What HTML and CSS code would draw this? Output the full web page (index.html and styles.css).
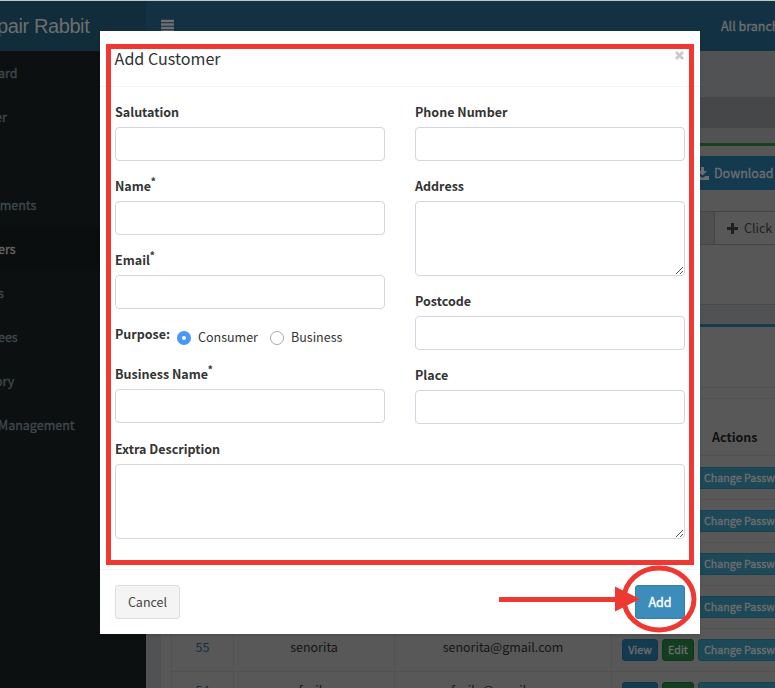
FILE: index.html
```html
<!DOCTYPE html>
<html lang="en">
<head>
<meta charset="utf-8">
<title>Repair Rabbit</title>
<link rel="stylesheet" href="styles.css">
</head>
<body>
<div class="app">
  <header class="topbar">
    <div class="brand">pair Rabbit</div>
    <svg class="bars" width="14" height="14" viewBox="0 0 14 14"><path d="M0 2h13M0 5.500h13M0 9h13M0 12.500h13"/></svg>
    <span class="branch">All branches</span>
  </header>
  <div class="main">
    <nav class="sidebar">
      <a>ard</a><a class="tight">er</a><a></a><a class="tight">tments</a><a class="active">ers</a><a>s</a><a>ees</a><a class="tight">ory</a><a>Management</a>
    </nav>
    <div class="content">
      <div class="crumb"></div>
      <section class="tools">
        <div class="download"><svg width="13" height="13" viewBox="0 0 13 13"><path d="M5 0h3v4h3L6.500 8.500 2 4h3zM0 9h3.500l3 2 3-2H13v4H0z"/></svg>Download</div>
        <div class="filters"><div class="click"><svg width="11" height="11" viewBox="0 0 11 11"><path d="M4 0h3v4h4v3H7v4H4V7H0V4h4z"/></svg>Click</div></div>
      </section>
      <section class="list">
        <div class="band"></div>
        <div class="row head"><span></span><span></span><span></span><span class="actions">Actions</span></div>
        <div class="row"><span></span><span></span><span></span><span class="actions"><b class="view">View</b><b class="edit">Edit</b><b class="pass">Change Password</b></span></div>
        <div class="row"><span></span><span></span><span></span><span class="actions"><b class="view">View</b><b class="edit">Edit</b><b class="pass">Change Password</b></span></div>
        <div class="row"><span></span><span></span><span></span><span class="actions"><b class="view">View</b><b class="edit">Edit</b><b class="pass">Change Password</b></span></div>
        <div class="row"><span></span><span></span><span></span><span class="actions"><b class="view">View</b><b class="edit">Edit</b><b class="pass">Change Password</b></span></div>
        <div class="row"><span class="id">55</span><span>senorita</span><span>senorita@gmail.com</span><span class="actions"><b class="view">View</b><b class="edit">Edit</b><b class="pass">Change Password</b></span></div>
        <div class="row"><span class="id">54</span><span>fazila</span><span>fazila@gmail.com</span><span class="actions"><b class="view">View</b><b class="edit">Edit</b><b class="pass">Change Password</b></span></div>
      </section>
    </div>
  </div>
</div>
<form class="modal">
  <div class="modal-header"><h4>Add Customer</h4><svg width="9" height="9" viewBox="0 0 9 9"><path d="M1 1l7 7M8 1L1 8"/></svg></div>
  <div class="modal-body">
    <div class="columns">
      <div>
        <label>Salutation</label><div class="input"></div>
        <label>Name<sup>*</sup></label><div class="input"></div>
        <label>Email<sup>*</sup></label><div class="input"></div>
        <div class="purpose"><strong>Purpose:</strong><i class="radio on"></i><span class="consumer">Consumer</span><i class="radio"></i><span>Business</span></div>
        <label>Business Name<sup>*</sup></label><div class="input"></div>
      </div>
      <div>
        <label>Phone Number</label><div class="input"></div>
        <label>Address</label><div class="input area"><svg width="9" height="9" viewBox="0 0 9 9"><path d="M1 8l7-7M5 8l3-3"/></svg></div>
        <label>Postcode</label><div class="input"></div>
        <label>Place</label><div class="input"></div>
      </div>
    </div>
    <label>Extra Description</label><div class="input area"><svg width="9" height="9" viewBox="0 0 9 9"><path d="M1 8l7-7M5 8l3-3"/></svg></div>
  </div>
  <div class="modal-footer"><div class="btn">Cancel</div><div class="btn add">Add</div></div>
</form>
<svg class="marks" width="775" height="688" viewBox="0 0 775 688"><rect class="line" x="108.500" y="46.500" width="583" height="516"/><path class="line" d="M499 599.500h118"/><ellipse class="line" cx="659" cy="599" rx="35" ry="31"/><path class="tip" d="M615 586.500l25 12.500-25 12.500z"/></svg>
</body>
</html>
```
FILE: styles.css
```css
* { box-sizing: border-box; }
body { margin: 0; width: 775px; height: 688px; overflow: hidden; position: relative; font: 12.5px/20px "Noto Sans CJK SC", sans-serif; color: #333; white-space: nowrap; }
.app { height: 688px; overflow: hidden; background: #515254; border-top: 1px solid #c3c6c3; }
.topbar { height: 50px; display: flex; background: #123244; color: #6e6e6e; }
.brand { width: 146px; flex: none; background: #112c3b; font: 20px/50px "Liberation Sans", sans-serif; letter-spacing: -.4px; text-indent: -3px; }
.bars { flex: none; margin: 18px 0 0 15px; stroke: #6e6e6e; stroke-width: 2.4; }
.branch { margin-left: 546px; line-height: 50px; }
.branch, .sidebar, .download, .row b { font-weight: 400; -webkit-text-stroke: .35px currentColor; }
.main { display: flex; }
.sidebar { width: 146px; height: 640px; background: #0c1011; color: #40484c; flex: none; text-indent: -2px; }
.sidebar a { display: block; height: 44px; line-height: 44px; }
.sidebar .tight { text-indent: -5px; }
.sidebar .active { color: #666; background: #0b0e0f; }
.content { flex: none; width: 720px; padding: 46px 0 0 15px; }
.crumb { height: 31px; background: #464749; margin-bottom: 15px; }
.tools { height: 162px; background: #575757; border-top: 3px solid #17401f; padding-top: 10px; border-bottom: 1px solid #4b4b4b; }
.download { margin-left: 523px; height: 34px; padding: 0 12px; background: #143a50; color: #6e6e6e; line-height: 34px; display: flex; align-items: center; gap: 5px; }
.download svg { fill: #6e6e6e; }
.filters { margin-top: 21px; height: 34px; padding-left: 552px; background: #505050; border: 1px solid #444; }
.click { background: #585858; border-left: 1px solid #444; line-height: 32px; padding-left: 12px; display: flex; gap: 6px; align-items: center; color: #202020; }
.click svg { fill: #202020; }
.list { margin-top: 19px; border-top: 3px solid #153b53; background: #585858; padding: 60px 0 0 10px; }
.band { height: 12px; margin: 0 0 18px -10px; border-top: 1px solid #525252; border-bottom: 1px solid #525252; }
.row { height: 43px; display: grid; grid-template-columns: 62px 161px 217px 280px; border-bottom: 1px solid #525252; color: #151515; text-align: center; line-height: 36px; }
.row span { border-left: 1px solid #525252; }
.row.head { height: 39px; font-weight: 700; color: #111; margin-bottom: 1px; }
.row .id { color: #162f3e; }
.row .actions { display: flex; gap: 4px; align-items: center; padding-left: 10px; }
.row.head .actions { padding: 1px 0 0 100px; }
.row b { flex: none; height: 22px; line-height: 20px; padding: 0 5px; border: 1px solid #12354a; border-radius: 3px; background: #143a50; color: #6e6e6e; font-size: 10.7px; }
.row .view { width: 36px; }
.row .edit { width: 32px; background: #123d20; border-color: #10351c; }
.row .pass { width: 120px; background: #1d4858; border-color: #19404f; text-align: left; }
.modal { position: absolute; left: 100px; top: 31px; width: 600px; height: 603px; background: #fff; box-shadow: 0 2px 3px rgba(0,0,0,.125); }
.modal-header { height: 56px; padding: 14px 15px 15px 14.6px; border-bottom: 1px solid #f4f4f4; display: flex; justify-content: space-between; }
h4 { margin: 0; font-size: 16.1px; font-weight: 400; line-height: 26px; }
.modal-header svg { margin: 6px 1px 0 0; stroke: #c8c8c8; stroke-width: 2.8; }
.modal-body { height: 482px; padding: 15px; }
.columns { display: grid; grid-template-columns: 270px 270px; gap: 30px; height: 337px; }
label { display: block; height: 20px; margin-bottom: 5px; font-weight: 700; }
sup { font-size: 9px; line-height: 0; vertical-align: 6px; -webkit-text-stroke: .3px #333; }
.input { height: 34px; border: 1px solid #d2d6de; border-radius: 4px; margin-bottom: 15px; }
.area { height: 75px; display: flex; justify-content: flex-end; align-items: flex-end; }
.area svg { stroke: #555; stroke-width: 1; fill: none; }
.purpose { display: flex; height: 25px; margin-bottom: 15px; align-items: center; }
.purpose strong { width: 62px; margin-top: -5px; }
.radio { width: 14px; height: 14px; border: 1px solid #aaa; border-radius: 50%; margin: 2px 7px 0 0; }
.radio.on { border: 5px solid #4797f8; }
.consumer { width: 72px; }
.modal-footer { border-top: 1px solid #f4f4f4; padding: 15px; display: flex; justify-content: space-between; }
.btn { height: 34px; border: 1px solid #ddd; border-radius: 3px; background: #f4f4f4; color: #444; width: 65px; text-align: center; line-height: 32px; }
.add { width: 50px; background: #3c8dbc; border-color: #367fa9; color: #fff; -webkit-text-stroke: .35px #fff; }
.marks { position: absolute; left: 0; top: 0; }
.line { fill: none; stroke: #ef3831; stroke-width: 5; }
.tip { fill: #ef3831; }
```
